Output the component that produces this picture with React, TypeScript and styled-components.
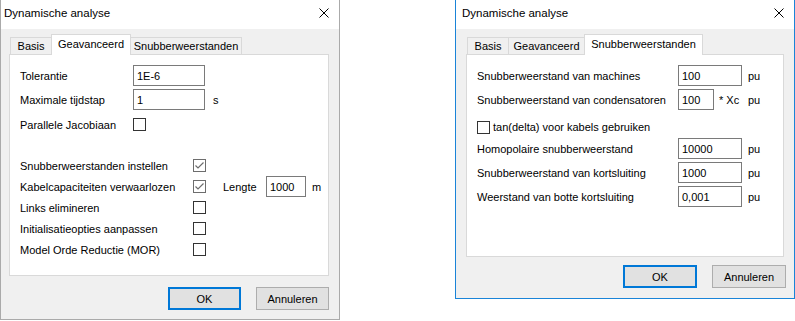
import React from 'react'
import styled, { createGlobalStyle } from 'styled-components'

const GlobalStyle = createGlobalStyle`
  body {
    margin: 0;
    background: #ffffff;
    font-family: "Liberation Sans", Arial, sans-serif;
    font-size: 11px;
    color: #000000;
  }
`

const Page = styled.div`
  display: flex;
  align-items: flex-start;
  gap: 115px;
`

const Window = styled.div<{ $h: number; $active?: boolean }>`
  width: 340px;
  height: ${(p) => p.$h}px;
  box-sizing: border-box;
  border: 1px solid ${(p) => (p.$active ? '#1a84d8' : '#aaaaaa')};
  border-top: none;
  background: #f0f0f0;
  display: flex;
  flex-direction: column;
`

const TitleBar = styled.div<{ $pl: number }>`
  height: 29px;
  flex: none;
  background: #ffffff;
  display: flex;
  align-items: center;
  padding: 0 10px 3px ${(p) => p.$pl}px;
  box-sizing: border-box;
  font-size: 11.5px;
`

const Close = styled.svg`
  margin-left: auto;
  width: 10px;
  height: 10px;
`

const Body = styled.div<{ $pl: number }>`
  padding: 5px 10px 0 ${(p) => p.$pl}px;
  display: flex;
  flex-direction: column;
`

const TabStrip = styled.div`
  display: flex;
  align-items: flex-end;
  height: 20px;
  padding-left: 1px;
`

const Tab = styled.div<{ $w: number; $sel?: boolean }>`
  width: ${(p) => p.$w}px;
  height: ${(p) => (p.$sel ? 21 : 17)}px;
  margin-left: -1px;
  margin-bottom: ${(p) => (p.$sel ? -1 : 0)}px;
  box-sizing: border-box;
  border: 1px solid #d9d9d9;
  border-bottom: none;
  background: ${(p) => (p.$sel ? '#ffffff' : '#f0f0f0')};
  position: relative;
  z-index: ${(p) => (p.$sel ? 2 : 1)};
  display: flex;
  align-items: center;
  justify-content: center;
  padding-bottom: ${(p) => (p.$sel ? 2 : 0)}px;
  &:first-child {
    margin-left: 0;
  }
`

const Panel = styled.div<{ $h: number }>`
  height: ${(p) => p.$h}px;
  box-sizing: border-box;
  border: 1px solid #d9d9d9;
  background: #ffffff;
  padding: 10px 0 0 10px;
`

const FieldRow = styled.div`
  display: flex;
  align-items: center;
  height: 21px;
  margin-bottom: 3px;
`

const CheckRow = styled.div<{ $mt?: number }>`
  display: flex;
  align-items: center;
  height: 21px;
  margin-top: ${(p) => p.$mt ?? 0}px;
`

const TopCheckRow = styled.div`
  display: flex;
  align-items: center;
  height: 25px;
  padding-top: 3px;
  box-sizing: border-box;
`

const Label = styled.span<{ $w: number }>`
  width: ${(p) => p.$w}px;
  flex: none;
  white-space: nowrap;
`

const Input = styled.div<{ $w: number }>`
  width: ${(p) => p.$w}px;
  height: 21px;
  box-sizing: border-box;
  border: 1px solid #7a7a7a;
  background: #ffffff;
  padding-left: 3px;
  display: flex;
  align-items: center;
  flex: none;
`

const Unit = styled.span<{ $ml: number; $w?: number }>`
  margin-left: ${(p) => p.$ml}px;
  width: ${(p) => (p.$w ? `${p.$w}px` : 'auto')};
  white-space: nowrap;
`

const Box = styled.div<{ $checked?: boolean }>`
  width: 13px;
  height: 13px;
  box-sizing: border-box;
  border: 1px solid ${(p) => (p.$checked ? '#6d6d6d' : '#333333')};
  background: #ffffff;
  flex: none;
  display: flex;
  align-items: center;
  justify-content: center;
`

const Footer = styled.div<{ $mt: number; $mr: number }>`
  display: flex;
  justify-content: flex-end;
  gap: 15px;
  margin-top: ${(p) => p.$mt}px;
  margin-right: ${(p) => p.$mr}px;
`

const Button = styled.div<{ $w: number; $def?: boolean }>`
  width: ${(p) => p.$w}px;
  height: 23px;
  box-sizing: border-box;
  background: #e1e1e1;
  border: ${(p) => (p.$def ? '2px solid #0078d7' : '1px solid #adadad')};
  display: flex;
  align-items: center;
  justify-content: center;
`

const CloseIcon = () => (
  <Close viewBox="0 0 10 10">
    <path d="M0.5 0.5 L9.5 9.5 M9.5 0.5 L0.5 9.5" stroke="#000" strokeWidth="1" fill="none" />
  </Close>
)

const Check: React.FC<{ checked?: boolean }> = ({ checked }) => (
  <Box $checked={checked}>
    {checked && (
      <svg width="11" height="11" viewBox="0 0 11 11">
        <path d="M1.5 5.5 L4 8 L9.5 2.5" stroke="#6d6d6d" strokeWidth="1.2" fill="none" />
      </svg>
    )}
  </Box>
)

const Geavanceerd = () => (
  <Window $h={320}>
    <TitleBar $pl={3}>
      Dynamische analyse
      <CloseIcon />
    </TitleBar>
    <Body $pl={8}>
      <TabStrip>
        <Tab $w={42}>Basis</Tab>
        <Tab $w={80} $sel>Geavanceerd</Tab>
        <Tab $w={112}>Snubberweerstanden</Tab>
      </TabStrip>
      <Panel $h={222}>
        <FieldRow>
          <Label $w={113}>Tolerantie</Label>
          <Input $w={72}>1E-6</Input>
        </FieldRow>
        <FieldRow>
          <Label $w={113}>Maximale tijdstap</Label>
          <Input $w={72}>1</Input>
          <Unit $ml={8}>s</Unit>
        </FieldRow>
        <CheckRow $mt={4}>
          <Label $w={113}>Parallele Jacobiaan</Label>
          <Check />
        </CheckRow>
        <CheckRow $mt={20}>
          <Label $w={173}>Snubberweerstanden instellen</Label>
          <Check checked />
        </CheckRow>
        <CheckRow>
          <Label $w={173}>Kabelcapaciteiten verwaarlozen</Label>
          <Check checked />
          <Unit $ml={17} $w={43}>Lengte</Unit>
          <Input $w={40}>1000</Input>
          <Unit $ml={6}>m</Unit>
        </CheckRow>
        <CheckRow>
          <Label $w={173}>Links elimineren</Label>
          <Check />
        </CheckRow>
        <CheckRow>
          <Label $w={173}>Initialisatieopties aanpassen</Label>
          <Check />
        </CheckRow>
        <CheckRow>
          <Label $w={173}>Model Orde Reductie (MOR)</Label>
          <Check />
        </CheckRow>
      </Panel>
      <Footer $mt={11} $mr={0}>
        <Button $w={73} $def>OK</Button>
        <Button $w={73}>Annuleren</Button>
      </Footer>
    </Body>
  </Window>
)

const Snubber = () => (
  <Window $h={299} $active>
    <TitleBar $pl={6}>
      Dynamische analyse
      <CloseIcon />
    </TitleBar>
    <Body $pl={10}>
      <TabStrip>
        <Tab $w={42}>Basis</Tab>
        <Tab $w={77}>Geavanceerd</Tab>
        <Tab $w={119} $sel>Snubberweerstanden</Tab>
      </TabStrip>
      <Panel $h={203}>
        <FieldRow>
          <Label $w={201}>Snubberweerstand van machines</Label>
          <Input $w={64}>100</Input>
          <Unit $ml={6}>pu</Unit>
        </FieldRow>
        <FieldRow>
          <Label $w={201}>Snubberweerstand van condensatoren</Label>
          <Input $w={36}>100</Input>
          <Unit $ml={5} $w={29}>* Xc</Unit>
          <Unit $ml={0}>pu</Unit>
        </FieldRow>
        <TopCheckRow>
          <Check />
          <Unit $ml={3}>tan(delta) voor kabels gebruiken</Unit>
        </TopCheckRow>
        <FieldRow>
          <Label $w={201}>Homopolaire snubberweerstand</Label>
          <Input $w={64}>10000</Input>
          <Unit $ml={6}>pu</Unit>
        </FieldRow>
        <FieldRow>
          <Label $w={201}>Snubberweerstand van kortsluiting</Label>
          <Input $w={64}>1000</Input>
          <Unit $ml={6}>pu</Unit>
        </FieldRow>
        <FieldRow>
          <Label $w={201}>Weerstand van botte kortsluiting</Label>
          <Input $w={64}>0,001</Input>
          <Unit $ml={6}>pu</Unit>
        </FieldRow>
      </Panel>
      <Footer $mt={8} $mr={-2}>
        <Button $w={74} $def>OK</Button>
        <Button $w={74}>Annuleren</Button>
      </Footer>
    </Body>
  </Window>
)

export default function App() {
  return (
    <>
      <GlobalStyle />
      <Page>
        <Geavanceerd />
        <Snubber />
      </Page>
    </>
  )
}
